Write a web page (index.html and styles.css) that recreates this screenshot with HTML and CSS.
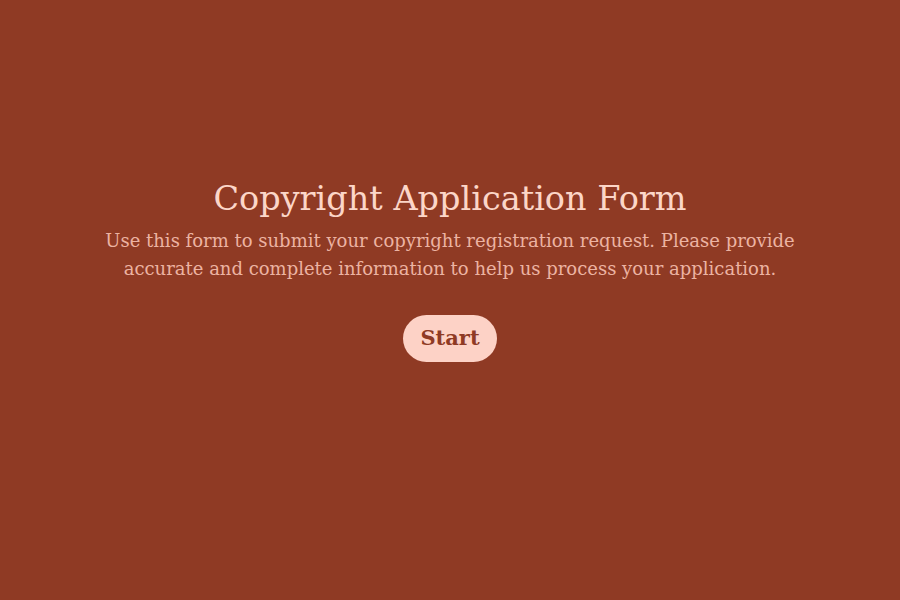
FILE: index.html
```html
<!DOCTYPE html>
<html lang="en">
<head>
<meta charset="utf-8">
<title>Copyright Application Form</title>
<link rel="stylesheet" href="styles.css">
</head>
<body>
<main class="intro">
  <h1 class="intro-title">Copyright Application Form</h1>
  <p class="intro-text">Use this form to submit your copyright registration request. Please provide accurate and complete information to help us process your application.</p>
  <button class="start-btn" type="button">Start</button>
</main>
</body>
</html>
```
FILE: styles.css
```css
html, body {
  margin: 0;
  padding: 0;
  height: 100%;
}
body {
  background: #8f3a24;
  font-family: "DejaVu Serif", "Liberation Serif", serif;
  display: flex;
  align-items: center;
  justify-content: center;
}
.intro {
  display: flex;
  flex-direction: column;
  align-items: center;
  text-align: center;
  max-width: 730px;
  margin-top: -64px;
}
.intro-title {
  margin: 0;
  font-size: 33.5px;
  font-weight: 400;
  line-height: 48px;
  color: #fcd6c8;
}
.intro-text {
  margin: 4px 0 0;
  font-size: 18px;
  line-height: 28px;
  color: #ecb3a2;
}
.start-btn {
  margin-top: 32px;
  border: none;
  background: #fdd2c6;
  color: #8f3a24;
  font-family: inherit;
  font-weight: 700;
  font-size: 21px;
  line-height: 28px;
  padding: 9px 17px 10px;
  border-radius: 24px;
  cursor: pointer;
}
```
